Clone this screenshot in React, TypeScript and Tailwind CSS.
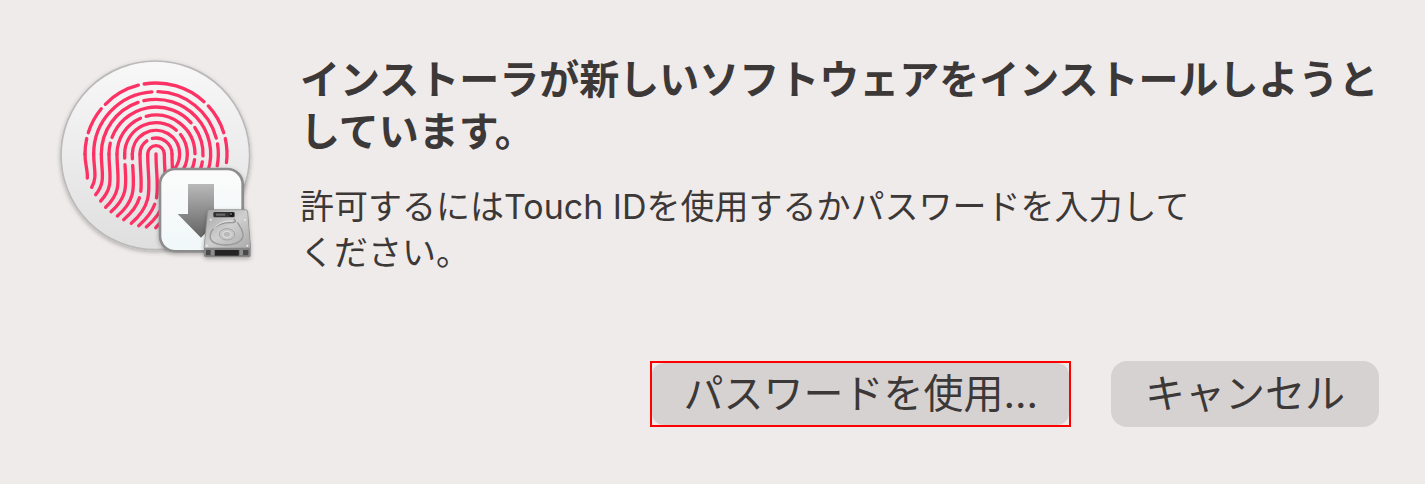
const CX = 306
const CY = 300

// Arches of the fingerprint, inside out. Gaps are angles in degrees, 90 is the top.
const arches = [
  { r: 25, from: 0, to: 180, gaps: [] },
  { r: 48, from: 0, to: 180, gaps: [114] },
  { r: 71, from: -60, to: 180, gaps: [] },
  { r: 94, from: -40, to: 180, gaps: [44] },
  { r: 117, from: -25, to: 180, gaps: [109, -4] },
  { r: 141, from: -20, to: 180, gaps: [163, 38, -6] },
  { r: 164, from: -18, to: 180, gaps: [106] },
  { r: 187, from: -11, to: 180, gaps: [91, 12] },
  { r: 213, from: -7, to: 180, gaps: [165, 138, 102, 45, 15] },
]

// Ridges that run down to the lower left edge.
const tails = [
  { x: 93, end: [100, 372] },
  { x: 119, end: [113, 400] },
  { x: 142, end: [125, 422] },
  { x: 165, end: [140, 441] },
  { x: 189, end: [155, 460] },
  { x: 212, end: [171, 473], dash: '12 20 999' },
  { x: 235, end: [190, 486], dash: '14 20 999' },
  { x: 258, end: [209, 497], dash: '112 20 999' },
  { x: 281, end: [232, 508] },
  { x: 306, end: [254, 515], dash: '132 20 999' },
  { x: 331, end: [277, 519] },
  { x: 354, end: [305, 521] },
]

function point(r: number, deg: number) {
  const a = (deg * Math.PI) / 180
  return `${(CX + r * Math.cos(a)).toFixed(1)} ${(CY - r * Math.sin(a)).toFixed(1)}`
}

function archPath(r: number, from: number, to: number, gaps: number[]) {
  const half = (9 / r) * (180 / Math.PI)
  const cuts = [...gaps].sort((a, b) => a - b)
  const starts = [from, ...cuts.map((g) => g + half)]
  const ends = [...cuts.map((g) => g - half), to]
  return starts
    .map((s, i) => `M${point(r, s)}A${r} ${r} 0 ${ends[i] - s > 180 ? 1 : 0} 0 ${point(r, ends[i])}`)
    .join('')
}

function tailPath(x: number, end: number[]) {
  const h = end[1] - CY
  return `M${x} ${CY}C${x} ${CY + h * 0.45} ${x + h * 0.12} ${CY + h * 0.69} ${end[0]} ${end[1]}`
}

function TouchIdIcon() {
  return (
    <svg viewBox="0 0 612 630" className="h-[210px] w-[204px] shrink-0" role="img" aria-label="Touch ID">
      <defs>
        <linearGradient id="disc" x1="0" y1="0" x2="0" y2="1">
          <stop offset="0" stopColor="#f8f8f8" />
          <stop offset="1" stopColor="#e0dfe0" />
        </linearGradient>
        <linearGradient id="card" x1="0" y1="0" x2="0" y2="1">
          <stop offset="0" stopColor="#fbfbfb" />
          <stop offset="1" stopColor="#f1f8f9" />
        </linearGradient>
        <linearGradient id="arrow" x1="0" y1="0" x2="0" y2="1">
          <stop offset="0" stopColor="#b9b9b9" />
          <stop offset="1" stopColor="#626262" />
        </linearGradient>
        <linearGradient id="drive" x1="0" y1="0" x2="1" y2="1">
          <stop offset="0" stopColor="#a4a4a4" />
          <stop offset="0.5" stopColor="#cfcfcf" />
          <stop offset="1" stopColor="#a9a9a9" />
        </linearGradient>
        <filter id="shadow" x="-10%" y="-10%" width="120%" height="120%">
          <feDropShadow dx="0" dy="5" stdDeviation="6" floodColor="#000" floodOpacity="0.28" />
        </filter>
      </defs>

      <circle cx="304" cy="304" r="283" fill="url(#disc)" stroke="#bbb9ba" strokeWidth="5" filter="url(#shadow)" />

      <g fill="none" stroke="#fd3264" strokeWidth="10" strokeLinecap="round">
        {arches.map((a) => (
          <path key={a.r} d={archPath(a.r, a.from, a.to, a.gaps)} />
        ))}
        {tails.map((t) => (
          <path key={t.x} d={tailPath(t.x, t.end)} strokeDasharray={t.dash} />
        ))}
      </g>

      {/* Installer badge */}
      <rect x="318" y="345" width="248" height="247" rx="46" fill="url(#card)" stroke="#8d8d8d" strokeWidth="8" filter="url(#shadow)" />
      <path d="M402 390H480V480H511L441 551L371 480H402Z" fill="url(#arrow)" />

      {/* Hard drive */}
      <g filter="url(#shadow)">
        <path d="M468 467H574Q580 467 581 473L590 582V604Q590 610 584 610H456Q450 610 450 604V582L461 473Q462 467 468 467Z" fill="#858585" />
        <path d="M468 467H574Q580 467 581 473L590 582H450L461 473Q462 467 468 467Z" fill="url(#drive)" stroke="#8c8c8c" strokeWidth="2" />
      </g>
      <path d="M456 588H583V604H456Z" fill="#4a4a4a" />
      <path d="M482 588H554V605H482Z" fill="#242424" />
      <path d="M470 588H482V604H470ZM556 588H567V604H556Z" fill="#8e8e8e" />
      <rect x="478" y="474" width="64" height="16" rx="4" fill="#333" />
      <path d="M486 479H514V485H486Z" fill="#6d6d6d" />
      <circle cx="533" cy="482" r="7" fill="#171717" />
      <circle cx="531" cy="480" r="2" fill="#ddd" />
      <path d="M539 494C550 504 543 506 526 506C496 507 474 522 469 541C463 564 489 574 519 573C552 571 569 558 567 540C565 523 556 516 550 505" fill="none" stroke="#989898" strokeWidth="4" />
      <path d="M536 502C512 498 490 509 479 525" fill="none" stroke="#e5e5e5" strokeWidth="3" />
      <ellipse cx="519" cy="541" rx="23" ry="17" fill="#c9c9c9" stroke="#a2a2a2" strokeWidth="3" />
      <ellipse cx="519" cy="541" rx="12" ry="9" fill="#b9b9b9" stroke="#e0e0e0" strokeWidth="3" />
      <g fill="#eee">
        <circle cx="470" cy="497" r="3" />
        <circle cx="573" cy="497" r="3" />
        <circle cx="459" cy="575" r="3" />
        <circle cx="580" cy="575" r="3" />
      </g>
    </svg>
  )
}

export default function App() {
  return (
    <main className="min-h-screen bg-[#efebea] pt-[54px] pr-[46px] pb-14 pl-[54px] font-['Inter','Noto_Sans_CJK_JP',sans-serif] text-[#3c3837]">
      <div className="flex gap-[42px]">
        <TouchIdIcon />
        <div className="min-w-0 flex-1 whitespace-nowrap">
          <h1 className="text-[40px]/[52px] font-bold">
            インストーラが新しいソフトウェアをインストールしようと
            <br />
            しています。
          </h1>
          <p className="mt-[26px] text-[34px]/[46px]">
            許可するにはTouch IDを使用するかパスワードを入力して
            <br />
            ください。
          </p>
        </div>
      </div>

      <div className="mt-[85px] flex justify-end gap-10 text-[40px]/[62px]">
        <div className="border-2 border-[#ff0000]">
          <button type="button" className="block rounded-xl bg-[#d6d2d1] px-[31px]">
            パスワードを使用...
          </button>
        </div>
        <button type="button" className="rounded-2xl bg-[#d6d2d1] px-[34px]">
          キャンセル
        </button>
      </div>
    </main>
  )
}
